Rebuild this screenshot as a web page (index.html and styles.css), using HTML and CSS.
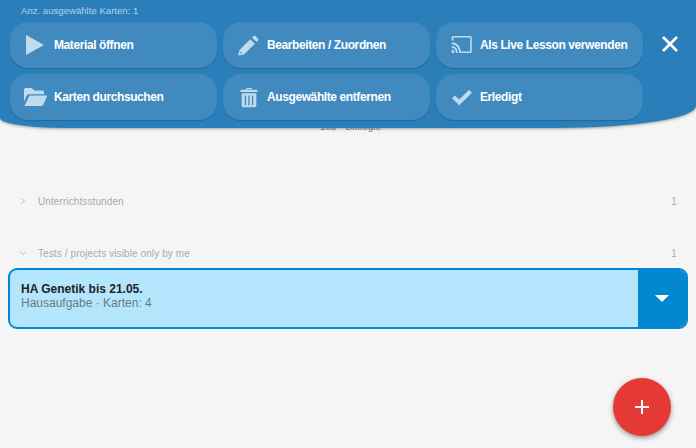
FILE: index.html
```
<!DOCTYPE html>
<html lang="de">
<head>
<meta charset="utf-8">
<title>Karten</title>
<link rel="stylesheet" href="styles.css">
</head>
<body>
<main class="page">
  <div class="course">10b · Biologie</div>
  <div class="section section-first">
    <svg class="chev" viewBox="0 0 8 8"><path d="M2.5 1.5 5.5 4 2.5 6.5" /></svg>
    <span class="section-name">Unterrichtsstunden</span>
    <span class="section-count">1</span>
  </div>
  <div class="section section-second">
    <svg class="chev" viewBox="0 0 8 8"><path d="M1.2 2.8 4 5.5 6.8 2.8" /></svg>
    <span class="section-name">Tests / projects visible only by me</span>
    <span class="section-count">1</span>
  </div>
  <article class="card">
    <div class="card-body">
      <div class="card-title">HA Genetik bis 21.05.</div>
      <div class="card-sub">Hausaufgabe · Karten: 4</div>
    </div>
    <div class="card-toggle"><span class="caret"></span></div>
  </article>
</main>

<header class="bar">
  <div class="bar-label">Anz. ausgewählte Karten: 1</div>
  <div class="bar-row">
    <div class="actions">
      <button class="action"><span class="ico"><svg viewBox="0 0 24 24" width="24" height="24"><path d="M2 2 20 12 2 22Z"/></svg></span>Material öffnen</button>
      <button class="action"><span class="ico"><svg viewBox="0 0 24 24" width="24" height="24"><path fill-rule="evenodd" d="M13.3 6.3 17.8 10.8 7 21.5 1 22.5 2.5 17ZM3.6 18.4 3 20.6 5.2 20.2ZM15 4.6 16.3 3.3C17 2.7 18 2.7 18.7 3.3L20.8 5.4C21.4 6.1 21.4 7.1 20.8 7.8L19.5 9.1Z"/></svg></span>Bearbeiten / Zuordnen</button>
      <button class="action"><span class="ico"><svg viewBox="0 0 24 24" width="24" height="24"><path transform="translate(.8 .75) scale(.9)" d="M1 4.2C1 3.2 1.8 2.5 2.8 2.5H21.5C22.5 2.5 23.3 3.2 23.3 4.2V19.8C23.3 20.8 22.5 21.5 21.5 21.5H11.5V19.7H21.5V4.3H2.8V7.4H1ZM1 9.5C6.8 9.5 11.4 14.5 11.4 21.5H9.3C9.3 15.5 5.7 11.6 1 11.6ZM1 13.5C4.9 13.5 7.8 16.8 7.8 21.5H5.7C5.7 17.9 3.6 15.6 1 15.6ZM1 17.4C2.9 17.4 4.2 19.2 4.2 21.5H1Z"/></svg></span>Als Live Lesson verwenden</button>
      <button class="action"><span class="ico"><svg viewBox="0 0 24 24" width="24" height="24"><path transform="translate(-1 0)" d="M1 5C1 3.7 2 3 3 3H8.5L11.5 5.6H19C20.1 5.6 21 6.4 21 7.6V9.2H6.2C5 9.2 4.2 9.8 3.7 10.8L1 16.6ZM6.4 10.6H23.6C24 10.6 24.2 11 24 11.4L20.4 19.6C20.1 20.4 19.4 20.9 18.5 20.9H1.4Z"/></svg></span>Karten durchsuchen</button>
      <button class="action"><span class="ico"><svg viewBox="0 0 24 24" width="24" height="24"><path transform="translate(1.8 2.3) scale(.85)" fill-rule="evenodd" d="M8.2 3 9.3 .8H14.7L15.8 3H21C21.6 3 22 3.4 22 4V5.6H2V4C2 3.4 2.4 3 3 3ZM10.2 2 9.7 3H14.3L13.8 2ZM3.4 7H20.6V21.4C20.6 22.6 19.7 23.6 18.5 23.6H5.5C4.3 23.6 3.4 22.6 3.4 21.4ZM7 9.5V21H8.6V9.5ZM11.2 9.5V21H12.8V9.5ZM15.4 9.5V21H17V9.5Z"/></svg></span>Ausgewählte entfernen</button>
      <button class="action"><span class="ico"><svg viewBox="0 0 24 24" width="24" height="24"><path transform="translate(.8 1) scale(.93)" d="M1.3 13.2 4.4 10.1 9 14.6 19.6 4.2 22.8 7.3 9.1 20.8Z"/></svg></span>Erledigt</button>
    </div>
    <button class="close" aria-label="Schließen"><svg viewBox="0 0 16 16" width="16" height="16"><path d="M1 1 15 15M15 1 1 15"/></svg></button>
  </div>
</header>

<button class="fab" aria-label="Neu"><svg viewBox="0 0 14 14" width="14" height="14"><path d="M7 0V14M0 7H14"/></svg></button>
</body>
</html>
```
FILE: styles.css
```
* { box-sizing: border-box; }
html, body { margin: 0; height: 100%; }
body {
  background: #f5f5f5;
  font-family: "Liberation Sans", Arial, sans-serif;
  overflow: hidden;
}
.page { padding: 121px 8px 0; }
.course {
  font-size: 10px;
  line-height: 12px;
  color: #888;
  text-align: center;
  padding-left: 5px;
}
.section {
  display: flex;
  align-items: center;
  height: 14px;
  padding: 0 16px 0 11px;
  font-size: 10px;
  letter-spacing: .1px;
  color: #aaa;
}
.section-first { margin-top: 61px; }
.section-second { margin-top: 38px; }
.chev { width: 8px; height: 8px; fill: none; stroke: #aaa; stroke-width: .8; }
.section-name { margin-left: 11px; flex: 1; }
.section-count { color: #aaa; margin-right: -5px; }
.card {
  display: flex;
  height: 61px;
  margin-top: 8px;
  background: #b3e5fc;
  border: 2px solid #0288d1;
  border-radius: 9px;
  overflow: hidden;
}
.card-body { flex: 1; padding: 12px 0 0 11px; }
.card-title { font-size: 12px; line-height: 14px; font-weight: 700; color: #222; }
.card-sub { font-size: 12px; line-height: 14px; color: #6b7b84; }
.card-toggle {
  width: 48px;
  background: #0288d1;
  display: flex;
  align-items: center;
  justify-content: center;
}
.caret {
  width: 0; height: 0;
  border-left: 7px solid transparent;
  border-right: 7px solid transparent;
  border-top: 7px solid #fff;
  margin-right: 1px;
}
.bar {
  position: absolute;
  top: 0; left: 0; right: 0;
  height: 128px;
  padding: 5px 0 0 10px;
  background: #2a7fba;
  border-radius: 0 0 140px 65px / 0 0 22px 10px;
  box-shadow: 0 1px 3px rgba(0,0,0,.35);
}
.bar-label {
  font-size: 9.6px;
  line-height: 12px;
  color: #b4d2e6;
  padding-left: 11px;
  margin-bottom: 5px;
}
.bar-row { display: flex; align-items: flex-start; }
.actions {
  display: grid;
  grid-template-columns: repeat(3, 207px);
  grid-auto-rows: 46px;
  gap: 6px;
}
.action {
  display: flex;
  align-items: center;
  padding: 0 0 0 14px;
  border: 0;
  border-radius: 18px;
  background: #408ac0;
  box-shadow: 0 1px 1px rgba(0,0,0,.18);
  color: #fff;
  font: 700 12px "Liberation Sans", Arial, sans-serif;
  letter-spacing: -.4px;
  text-align: left;
}
.ico { width: 24px; height: 24px; margin-right: 6px; flex: none; }
.ico svg { display: block; fill: #c0dbec; }
.close {
  margin: 14px 0 0 19px;
  padding: 0;
  width: 16px; height: 16px;
  border: 0;
  background: none;
}
.close svg { display: block; fill: none; stroke: #fff; stroke-width: 2.6; }
.fab {
  position: absolute;
  left: 613px; top: 378px;
  width: 58px; height: 58px;
  border: 0;
  border-radius: 50%;
  padding: 0;
  background: #e53935;
  box-shadow: 0 2px 5px rgba(0,0,0,.4);
  display: flex;
  align-items: center;
  justify-content: center;
}
.fab svg { fill: none; stroke: #fff; stroke-width: 2; }
```
